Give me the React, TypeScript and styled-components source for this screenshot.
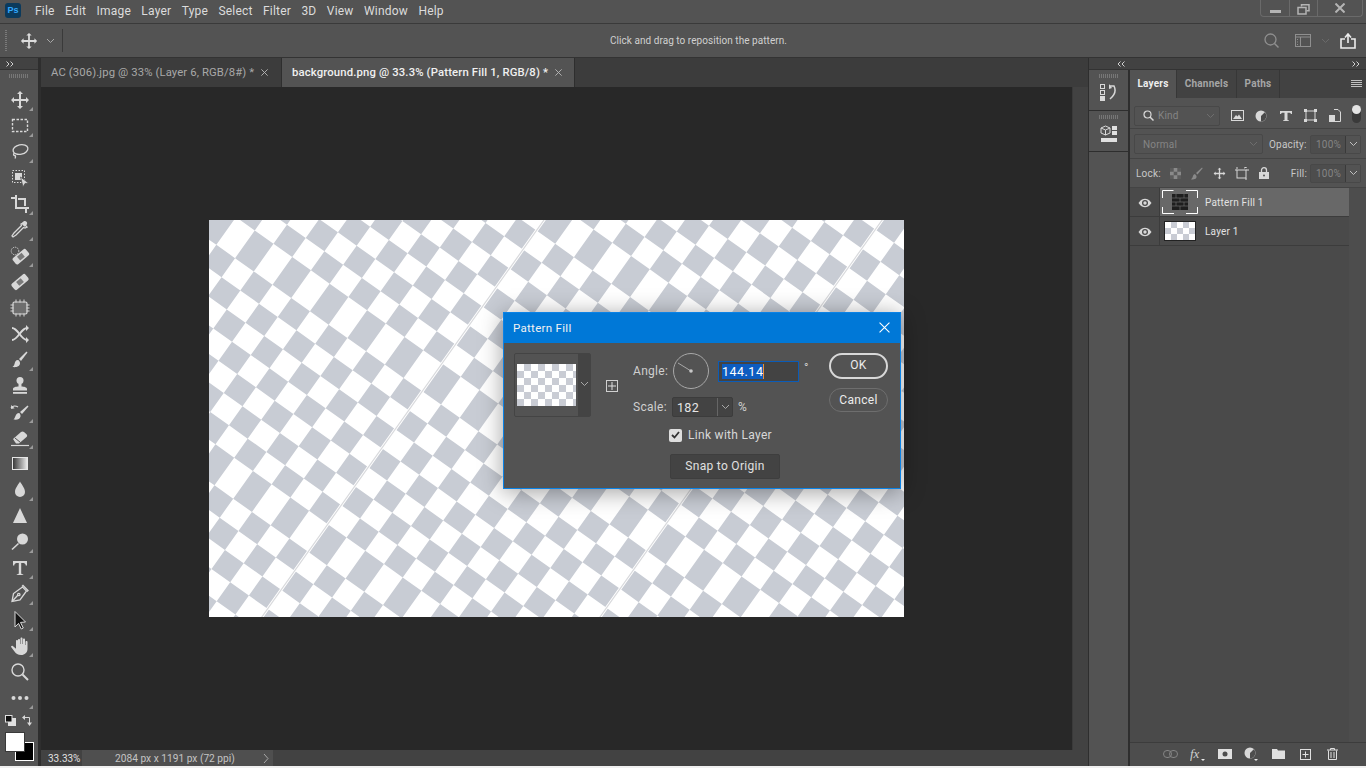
import React from 'react'
import styled, { createGlobalStyle } from 'styled-components'

const GlobalStyle = createGlobalStyle`
  html, body {
    margin: 0;
    padding: 0;
    background: #f0f0f0;
    overflow: hidden;
  }
  * {
    box-sizing: border-box;
  }
`

const Window = styled.div`
  width: 1366px;
  height: 768px;
  display: flex;
  flex-direction: column;
  background: #535353;
  color: #d6d6d6;
  font-family: Roboto, 'Noto Sans', sans-serif;
  font-size: 12px;
  overflow: hidden;
  border-bottom: 2px solid #f0f0f0;
`

/* menu bar */
const MenuBar = styled.div`
  height: 24px;
  flex: none;
  display: flex;
  align-items: flex-start;
  border-bottom: 1px solid #3a3a3a;
  position: relative;
`

const PsLogo = styled.div`
  width: 16px;
  height: 15px;
  margin: 3px 0 0 5px;
  background: #0b3a5c;
  border-radius: 3px;
  color: #31a8ff;
  font: 700 9px/15px 'Liberation Sans', sans-serif;
  text-align: center;
`

const MenuList = styled.div`
  display: flex;
  margin-left: 14px;
  gap: 10.4px;
  line-height: 22px;
  font-size: 12px;
  letter-spacing: 0.2px;
  color: #dcdcdc;
`

const WindowControls = styled.div`
  position: absolute;
  right: 3px;
  top: 0;
  width: 103px;
  height: 17px;
  display: grid;
  grid-template-columns: 28px 28px 1fr;
  border: 1px solid #6a6a6a;
  border-top: 0;
  border-radius: 0 0 4px 4px;
`

const WindowButton = styled.div<{ $pt?: number }>`
  display: flex;
  align-items: flex-start;
  justify-content: center;
  padding-top: ${({ $pt }) => $pt || 0}px;
  & + & {
    border-left: 1px solid #6a6a6a;
  }
`

/* options bar */
const OptionsBar = styled.div`
  height: 34px;
  flex: none;
  display: flex;
  align-items: center;
  border-bottom: 1px solid #333;
  position: relative;
`

const Grip = styled.div`
  width: 2px;
  height: 22px;
  margin-left: 5px;
  background: repeating-linear-gradient(to bottom, #7a7a7a 0 1px, transparent 1px 2px);
`

const OptionsMove = styled.div`
  display: flex;
  align-items: center;
  margin-left: 13px;
  gap: 8px;
`

const VSep = styled.div`
  width: 1px;
  height: 23px;
  margin-left: 7px;
  background: #3a3a3a;
`

const Hint = styled.div`
  position: absolute;
  left: 610px;
  top: 10px;
  font-size: 10px;
  line-height: 14px;
  letter-spacing: 0.05px;
  color: #d0d0d0;
`

const OptionsRight = styled.div`
  margin-left: auto;
  display: flex;
  align-items: center;
  gap: 10px;
  padding-right: 10px;
  & > svg:first-child {
    margin-right: 5px;
  }
`

/* main area */
const Main = styled.div`
  flex: 1;
  min-height: 0;
  display: flex;
`

const ToolColumn = styled.div`
  width: 41px;
  flex: none;
  display: flex;
  flex-direction: column;
  border-right: 3px solid #2e2e2e;
`

const CollapseStrip = styled.div<{ $align?: string }>`
  height: 12px;
  flex: none;
  display: flex;
  align-items: center;
  justify-content: ${({ $align }) => $align || 'flex-start'};
  padding: 0 6px;
  background: #424242;
  border-bottom: 1px solid #333;
`

const DockCollapse = styled.span`
  margin-left: 22px;
  display: flex;
`

const ToolGrip = styled.div`
  height: 17px;
  flex: none;
  display: flex;
  justify-content: center;
  padding-top: 4px;
  &::before {
    content: '';
    width: 20px;
    height: 4px;
    background: repeating-linear-gradient(to right, #777 0 1px, transparent 1px 2px);
  }
`

const ToolButton = styled.div<{ $more?: boolean }>`
  height: 26px;
  flex: none;
  display: flex;
  align-items: center;
  justify-content: center;
  padding-left: 2px;
  position: relative;
  &::after {
    content: '';
    display: ${({ $more }) => ($more ? 'block' : 'none')};
    position: absolute;
    right: 5px;
    bottom: 2px;
    border-style: solid;
    border-width: 0 0 4px 4px;
    border-color: transparent transparent #9a9a9a transparent;
  }
`

const SwapRow = styled.div`
  height: 18px;
  flex: none;
  display: flex;
  align-items: center;
  gap: 6px;
  padding-left: 5px;
`

const ColorStack = styled.div`
  position: relative;
  height: 30px;
  margin: 3px 0 0 5px;
`

const ColorChip = styled.div<{ $bg: boolean }>`
  position: absolute;
  width: ${({ $bg }) => ($bg ? '19px' : '20px')};
  height: ${({ $bg }) => ($bg ? '19px' : '20px')};
  left: ${({ $bg }) => ($bg ? '10px' : '0')};
  top: ${({ $bg }) => ($bg ? '10px' : '0')};
  background: ${({ $bg }) => ($bg ? '#000' : '#fff')};
  border: 1px solid ${({ $bg }) => ($bg ? '#fff' : '#3a3a3a')};
  z-index: ${({ $bg }) => ($bg ? 0 : 1)};
`

/* document area */
const DocColumn = styled.div`
  width: 1047px;
  flex: none;
  display: flex;
  flex-direction: column;
`

const TabBar = styled.div`
  height: 29px;
  flex: none;
  display: flex;
  background: #3c3c3c;
`

const Tab = styled.div<{ $active?: boolean; $w: number }>`
  width: ${({ $w }) => $w}px;
  display: flex;
  align-items: center;
  padding: 0 0 1px 10px;
  gap: 7px;
  font-size: 11.3px;
  letter-spacing: ${({ $active }) => ($active ? 0.15 : 0.12)}px;
  font-weight: ${({ $active }) => ($active ? 500 : 400)};
  color: ${({ $active }) => ($active ? '#f0f0f0' : '#a8a8a8')};
  background: ${({ $active }) => ($active ? '#535353' : '#3c3c3c')};
  border-right: 1px solid #2e2e2e;
  white-space: nowrap;
`

const DocBody = styled.div`
  flex: 1;
  min-height: 0;
  display: flex;
  position: relative;
`

const Pasteboard = styled.div`
  flex: 1;
  background: #282828;
  display: flex;
  align-items: center;
  justify-content: center;
`

const Artboard = styled.svg`
  display: block;
  width: 695px;
  height: 397px;
`

const VScroll = styled.div`
  width: 16px;
  flex: none;
  background: #424242;
  border-left: 1px solid #3a3a3a;
`

const StatusBar = styled.div`
  height: 16px;
  flex: none;
  display: flex;
  font-size: 10px;
  line-height: 17px;
  background: #424242;
`

const ZoomValue = styled.div`
  width: 41px;
  padding-left: 7px;
  color: #e0e0e0;
`

const DocInfo = styled.div`
  width: 191px;
  padding-left: 33px;
  background: #4f4f4f;
  color: #c4c4c4;
  display: flex;
  position: relative;
  font-size: 10.2px;
`

const InfoArrow = styled.div`
  position: absolute;
  right: 4px;
  top: 3px;
  display: flex;
`

/* dialog */
const Dialog = styled.div`
  position: absolute;
  left: 462px;
  top: 225px;
  width: 398px;
  height: 177px;
  background: #535353;
  border: 1px solid #0a82e6;
  box-shadow: 0 3px 22px rgba(0, 0, 0, 0.38);
  display: flex;
  flex-direction: column;
  letter-spacing: 0.3px;
`

const DialogTitle = styled.div`
  height: 30px;
  flex: none;
  background: #0078d7;
  color: #f2f2f2;
  display: flex;
  align-items: center;
  justify-content: space-between;
  padding: 0 10px 1px 9px;
  font-size: 11.5px;
`

const DialogBody = styled.div`
  flex: 1;
  display: grid;
  grid-template-columns: 77px 42px 196px 59px;
  padding: 10px 0 0 10px;
`

const PatternPicker = styled.div`
  width: 77px;
  height: 64px;
  display: flex;
  border: 1px solid #444;
  border-radius: 2px;
`

const PatternSwatchBox = styled.div`
  width: 63px;
  padding: 10px 0 0 2px;
`

const PatternSwatch = styled.div`
  width: 59px;
  height: 42px;
  background: repeating-conic-gradient(#c9ccd4 0 25%, #fff 0 50%) 0 0 / 14px 14px;
`

const PickerArrow = styled.div`
  flex: 1;
  background: #444;
  display: flex;
  align-items: center;
  justify-content: center;
  padding-bottom: 2px;
`

const PlusBox = styled.div`
  margin: 27px 0 0 15px;
  width: 12px;
  height: 12px;
  border: 1px solid #d0d0d0;
  display: flex;
  align-items: center;
  justify-content: center;
`

const ControlColumn = styled.div`
  display: flex;
  flex-direction: column;
  color: #cfcfcf;
`

const ControlRow = styled.div<{ $mt?: number }>`
  display: flex;
  align-items: center;
  margin-top: ${({ $mt }) => $mt || 0}px;
`

const ControlLabel = styled.span<{ $up?: boolean }>`
  width: 40px;
  flex: none;
  margin-top: ${({ $up }) => ($up ? -2 : 0)}px;
`

const AngleDial = styled.svg`
  flex: none;
`

const AngleInput = styled.div`
  width: 81px;
  height: 21px;
  margin: -2px 0 0 7px;
  padding-left: 3px;
  background: #434343;
  border: 1px solid #0b5cb8;
  display: flex;
  align-items: center;
  color: #fff;
  font-size: 12.5px;
  letter-spacing: 0.5px;
`

const Selected = styled.span`
  background: #0d5cc0;
  border-right: 1px solid #e8913a;
  line-height: 15px;
`

const Degree = styled.span`
  margin: -8px 0 0 5px;
  font-size: 12px;
`

const ScaleField = styled.div`
  width: 61px;
  height: 20px;
  margin-left: -1px;
  background: #434343;
  border: 1px solid #3c3c3c;
  border-radius: 2px;
  display: flex;
  align-items: center;
  padding-left: 4px;
  color: #e6e6e6;
  font-size: 12.5px;
`

const ScaleArrow = styled.div`
  margin-left: auto;
  width: 15px;
  height: 18px;
  border-left: 1px solid #666;
  display: flex;
  align-items: center;
  justify-content: center;
`

const Percent = styled.span`
  margin-left: 5px;
`

const CheckRow = styled.div`
  display: flex;
  align-items: center;
  gap: 6px;
  margin: 11px 0 0 36px;
  line-height: 14px;
  color: #d8d8d8;
`

const CheckMark = styled.div`
  width: 13px;
  height: 13px;
  border-radius: 2px;
  background: #dedede;
  display: flex;
  align-items: center;
  justify-content: center;
`

const SnapButton = styled.div`
  width: 110px;
  height: 25px;
  margin: 12px 0 0 37px;
  background: #434343;
  border: 1px solid #3e3e3e;
  border-radius: 2px;
  text-align: center;
  line-height: 23px;
  color: #e0e0e0;
`

const ButtonColumn = styled.div`
  display: flex;
  flex-direction: column;
  gap: 9px;
`

const PillButton = styled.div<{ $primary?: boolean }>`
  width: 59px;
  height: ${({ $primary }) => ($primary ? '26px' : '24px')};
  border: ${({ $primary }) => ($primary ? '2px solid #d8d8d8' : '1px solid #6e6e6e')};
  border-radius: 13px;
  text-align: center;
  line-height: ${({ $primary }) => ($primary ? '21px' : '22px')};
  color: #ececec;
`

/* right dock */
const RightArea = styled.div`
  flex: 1;
  min-width: 0;
  display: flex;
  flex-direction: column;
  border-left: 1px solid #2e2e2e;
`

const RightBody = styled.div`
  flex: 1;
  min-height: 0;
  display: flex;
`

const DockColumn = styled.div`
  width: 41px;
  flex: none;
  border-right: 2px solid #2e2e2e;
`

const DockGroup = styled.div`
  height: 41px;
  display: flex;
  flex-direction: column;
  align-items: center;
  border-bottom: 1px solid #2e2e2e;
  padding-top: 4px;
  &::before {
    content: '';
    width: 20px;
    height: 4px;
    margin-bottom: 6px;
    background: repeating-linear-gradient(to right, #777 0 1px, transparent 1px 2px);
  }
`

const LayersPanel = styled.div`
  flex: 1;
  min-width: 0;
  display: flex;
  flex-direction: column;
`

const PanelTabs = styled.div`
  height: 28px;
  flex: none;
  display: flex;
  background: #424242;
  align-items: stretch;
`

const PanelTab = styled.div<{ $active?: boolean; $w: number }>`
  width: ${({ $w }) => $w}px;
  text-align: center;
  line-height: 27px;
  font-size: 10px;
  font-weight: 700;
  letter-spacing: 0.2px;
  color: ${({ $active }) => ($active ? '#eeeeee' : '#a6a6a6')};
  background: ${({ $active }) => ($active ? '#535353' : 'transparent')};
  border-right: 1px solid #373737;
`

const MenuLines = styled.div`
  margin: 10px 4px 0 auto;
  width: 11px;
  height: 8px;
  background: repeating-linear-gradient(to bottom, #c0c0c0 0 1px, transparent 1px 2px);
`

const PanelRow = styled.div<{ $h: number; $pt?: number }>`
  height: ${({ $h }) => $h}px;
  flex: none;
  display: flex;
  align-items: center;
  padding: ${({ $pt }) => $pt || 0}px 5px 0 4px;
  border-bottom: 1px solid #444;
  font-size: 10px;
  letter-spacing: 0.2px;
`

const SelectBox = styled.div<{ $w: number }>`
  width: ${({ $w }) => $w}px;
  height: 20px;
  border: 1px solid #484848;
  border-radius: 2px;
  display: flex;
  align-items: center;
  padding: 0 4px 0 8px;
  gap: 4px;
  color: #858585;
  font-size: 10px;
  & > svg:last-child {
    margin-left: auto;
  }
`

const KindIcons = styled.div`
  display: flex;
  align-items: center;
  gap: 11.5px;
  margin-left: 11px;
`

const Toggle = styled.div`
  width: 9px;
  height: 18px;
  margin-top: -3px;
  border-radius: 5px;
  background: #3a3a3a;
  position: relative;
  &::before {
    content: '';
    position: absolute;
    left: 0;
    top: 0;
    width: 9px;
    height: 9px;
    border-radius: 50%;
    background: #e4e4e4;
  }
`

const FieldLabel = styled.span<{ $ml: number }>`
  margin-left: ${({ $ml }) => $ml}px;
  color: #c8c8c8;
`

const PercentField = styled.div`
  width: 51px;
  height: 19px;
  margin-left: auto;
  border: 1px solid #484848;
  border-radius: 2px;
  display: flex;
  align-items: center;
  color: #858585;
  padding-left: 5px;
  background: #4d4d4d;
`

const PercentArrow = styled.div`
  margin-left: auto;
  width: 15px;
  height: 17px;
  background: #535353;
  border-left: 1px solid #3a3a3a;
  display: flex;
  align-items: center;
  justify-content: center;
`

const LockIcons = styled.div`
  display: flex;
  align-items: center;
  gap: 9.5px;
  margin-left: 9px;
`

const LayerList = styled.div`
  flex: 1;
  min-height: 0;
  display: flex;
  background: #4a4a4a;
`

const LayerRows = styled.div`
  width: 219px;
`

const LayerScroll = styled.div`
  flex: 1;
  background: #4d4d4d;
`

const LayerRow = styled.div`
  height: 29px;
  display: flex;
  align-items: center;
  border-bottom: 1px solid #3c3c3c;
  font-size: 10px;
  letter-spacing: 0.2px;
  color: #e2e2e2;
`

const EyeCell = styled.div`
  width: 30px;
  height: 100%;
  padding-top: 1px;
  display: flex;
  align-items: center;
  justify-content: center;
  border-right: 1px solid #3c3c3c;
`

const LayerMain = styled.div<{ $active?: boolean }>`
  flex: 1;
  height: 100%;
  display: flex;
  align-items: center;
  gap: 7px;
  padding-left: 2px;
  background: ${({ $active }) => ($active ? '#686868' : 'transparent')};
`

const MaskThumb = styled.div`
  width: 36px;
  height: 24px;
  display: flex;
  align-items: center;
  justify-content: center;
`

const LayerThumb = styled.div`
  width: 32px;
  height: 20px;
  margin: 0 2px;
  border: 1px solid #222;
  background: repeating-conic-gradient(#c9ccd4 0 25%, #fff 0 50%) 0 0 / 12px 12px;
`

const PanelFooter = styled.div`
  height: 24px;
  flex: none;
  display: flex;
  align-items: center;
  justify-content: flex-end;
  padding: 0 20px 1px 0;
  border-top: 1px solid #3c3c3c;
  background: #4d4d4d;
`

const FooterSlot = styled.div`
  width: 27px;
  display: flex;
  align-items: center;
  justify-content: center;
`

const ICON = '#d8d8d8'

const Chevron: React.FC<{ color?: string }> = ({ color = '#a8a8a8' }) => (
  <svg width="9" height="6" viewBox="0 0 9 6">
    <path d="M1 1l3.5 3.5L8 1" fill="none" stroke={color} strokeWidth="1" />
  </svg>
)

const Double: React.FC<{ left?: boolean }> = ({ left }) => (
  <svg width="8" height="6" viewBox="0 0 8 6">
    <path
      d={left ? 'M3.5 .5L1 3l2.5 2.5M7.5 .5L5 3l2.5 2.5' : 'M.5 .5L3 3 .5 5.5M4.5 .5L7 3 4.5 5.5'}
      fill="none"
      stroke="#d0d0d0"
      strokeWidth="1"
    />
  </svg>
)

const Close: React.FC<{ size?: number; color?: string; weight?: number }> = ({
  size = 7,
  color = '#b8b8b8',
  weight = 1.3,
}) => (
  <svg width={size} height={size} viewBox="0 0 10 10">
    <path d="M.5 .5l9 9M9.5 .5l-9 9" stroke={color} strokeWidth={weight} fill="none" />
  </svg>
)

const MovePath = 'M10 1l3 3h-2v5h5V7l3 3-3 3v-2h-5v5h2l-3 3-3-3h2v-5H4v2l-3-3 3-3v2h5V4H7z'

const Eye = () => (
  <svg width="14" height="10" viewBox="0 0 14 10">
    <path d="M.5 5C3 1.5 5 .8 7 .8s4 .7 6.5 4.2C11 8.5 9 9.2 7 9.2S3 8.5 .5 5z" fill="#d8d8d8" />
    <circle cx="7" cy="5" r="3" fill="#4a4a4a" />
    <circle cx="7" cy="5" r="1.7" fill="#d8d8d8" />
  </svg>
)

const tools: { more: boolean; icon: React.ReactNode }[] = [
  { more: true, icon: <path d={MovePath} fill={ICON} /> },
  { more: true, icon: <rect x="2.5" y="3.5" width="15" height="12" fill="none" stroke={ICON} strokeWidth="1.4" strokeDasharray="2.5 1.5" /> },
  {
    more: true,
    icon: (
      <g fill="none" stroke={ICON} strokeWidth="1.3">
        <ellipse cx="10.5" cy="7.5" rx="7.5" ry="4.8" transform="rotate(-12 10.5 7.5)" />
        <path d="M4.5 11c-1.5 1-1 2.5 0 2.5s1.5 1 .5 3" />
      </g>
    ),
  },
  {
    more: false,
    icon: (
      <g>
        <rect x="2.5" y="2.5" width="12" height="12" fill="none" stroke={ICON} strokeDasharray="1.5 1.5" />
        <rect x="5" y="5" width="7" height="7" fill={ICON} />
        <path d="M10.5 9l8 6-3.5.5L13 19z" fill={ICON} stroke="#535353" strokeWidth=".8" />
      </g>
    ),
  },
  {
    more: true,
    icon: <path d="M1 3h4V1h2v12h12v2h-2v4h-2v-4H5V5H1zM8 4h8v8h-2V6H8z" fill={ICON} />,
  },
  {
    more: true,
    icon: (
      <g>
        <path d="M13 3l4 4-2 1-1.5-.5L6 15l-3 2-1-1 2-3 7.5-7.5L11 4z" fill="none" stroke={ICON} strokeWidth="1.3" />
        <path d="M12.5 2.5c1.5-1.8 3-1.8 4-.8s1 2.5-.8 4l-1.2 1-3-3z" fill={ICON} />
      </g>
    ),
  },
  {
    more: true,
    icon: (
      <g>
        <g transform="rotate(-40 10.5 11)">
          <rect x="2.5" y="7" width="17" height="8" rx="2" fill={ICON} />
          <rect x="8" y="8.5" width="6" height="5" fill="#7a7a7a" />
        </g>
        <circle cx="5" cy="5" r="3.8" fill="none" stroke={ICON} strokeWidth="1" strokeDasharray="1.2 1" />
      </g>
    ),
  },
  {
    more: false,
    icon: (
      <g transform="rotate(-40 10 10)">
        <rect x="1" y="6" width="18" height="8" rx="2" fill={ICON} />
        <rect x="7" y="7.5" width="6" height="5" fill="#7a7a7a" />
      </g>
    ),
  },
  {
    more: false,
    icon: (
      <g>
        <rect x="3" y="4" width="14" height="12" rx="1.5" fill="#6e6e6e" stroke={ICON} strokeWidth="1.2" />
        <path d="M6 1.5v3M10 1.5v3M14 1.5v3M6 15.5v3M10 15.5v3M14 15.5v3M.5 7h3M.5 10h3M.5 13h3M16.5 7h3M16.5 10h3M16.5 13h3" stroke={ICON} strokeWidth="1" />
      </g>
    ),
  },
  {
    more: false,
    icon: (
      <g fill="none" stroke={ICON} strokeWidth="2">
        <path d="M2 4c6 0 9 12 15 12" />
        <path d="M2 16c6 0 9-12 15-12" />
        <path d="M16 1l3 3-3 3zM16 13l3 3-3 3z" fill={ICON} stroke="none" />
      </g>
    ),
  },
  {
    more: true,
    icon: (
      <g fill={ICON}>
        <path d="M16.5 1.5l1 1L11 11 9 9z" />
        <path d="M8 10c-2.5 0-3 2-3.5 4S3 16.5 2.5 17c3 .5 7 0 7.5-3.5.2-1.5-.6-3-2-3.5z" />
      </g>
    ),
  },
  {
    more: false,
    icon: (
      <g fill={ICON}>
        <circle cx="10" cy="4.5" r="3.5" />
        <path d="M8.5 7h3v3.5c2 .2 5.5.5 5.5 2.5v1.5H3V13c0-2 3.5-2.3 5.5-2.5z" />
        <rect x="3" y="16" width="14" height="1.8" />
      </g>
    ),
  },
  {
    more: true,
    icon: (
      <g>
        <path d="M17.5 3.5l1 1L12 12l-2-2z" fill={ICON} />
        <path d="M9 11c-2 0-3 1.5-3.5 3S4 17 3.5 17.5c3 .5 6.5 0 7-3 .2-1.5-.3-3-1.5-3.5z" fill={ICON} />
        <path d="M1 6c1.5-2 4.5-2.5 7-1" fill="none" stroke={ICON} strokeWidth="1.3" />
        <path d="M1 3l.2 4 3.5-.8z" fill={ICON} />
      </g>
    ),
  },
  {
    more: true,
    icon: (
      <g>
        <path d="M3 11l8-7c1-.8 2-.8 3 0l2.5 2.2c.9 1 .8 2 0 2.8L9 15.5H6z" fill={ICON} />
        <path d="M5 10l5.5 4.5" stroke="#535353" strokeWidth="1" />
        <path d="M1 17.5h18" stroke={ICON} strokeWidth="1.2" />
      </g>
    ),
  },
  {
    more: false,
    icon: (
      <g>
        <defs>
          <linearGradient id="toolGradient" x1="0" y1="0" x2="1" y2="0">
            <stop offset="0" stopColor="#333" />
            <stop offset="1" stopColor="#eee" />
          </linearGradient>
        </defs>
        <rect x="2.5" y="3.5" width="15" height="12" fill="url(#toolGradient)" stroke="#e6e6e6" strokeWidth="1" />
      </g>
    ),
  },
  { more: true, icon: <path d="M10 1.5c1.5 3 5 6.5 5 10.5a5 5 0 0 1-10 0c0-4 3.5-7.5 5-10.5z" fill={ICON} /> },
  { more: false, icon: <path d="M10 2l7 15H3z" fill={ICON} /> },
  {
    more: true,
    icon: (
      <g>
        <circle cx="12.5" cy="7" r="5.5" fill={ICON} />
        <path d="M8.5 11.5L2 17.5" stroke={ICON} strokeWidth="1.6" />
      </g>
    ),
  },
  { more: true, icon: <path d="M3 3h14v4.5h-1.2C15.5 5.5 14.5 5 12 5h-.8v10c0 1 .4 1.3 2 1.3V17H6.8v-.7c1.6 0 2-.3 2-1.3V5H8C5.5 5 4.5 5.5 4.2 7.5H3z" fill={ICON} /> },
  {
    more: true,
    icon: (
      <g fill="none" stroke={ICON} strokeWidth="1.3">
        <path d="M12.5 3L3.5 9.5 2 17.5l8-1.5 6.5-9z" />
        <path d="M2.5 17L8 11" />
        <circle cx="8.8" cy="10.5" r="1.2" />
        <path d="M12 2.5l1-1 5 5-1 1" />
      </g>
    ),
  },
  { more: true, icon: <path d="M5 1.5L15.5 12l-5 .4 2.8 5.6-2 1-2.8-5.6L5 17z" fill="#141414" stroke={ICON} strokeWidth="1" /> },
  {
    more: true,
    icon: (
      <path
        d="M8 4c0-1.3 2-1.3 2 0v4h.5V2.5c0-1.3 2-1.3 2 0V8h.5V3.5c0-1.3 2-1.3 2 0V9h.5V6c0-1.3 2-1.3 2 0v7c0 3.5-2.8 6-6.3 6S6 17.5 4.5 15.5L1.3 11.3c-.8-1 .6-2.2 1.5-1.3L6 12.8V5c0-1.3 2-1.3 2 0z"
        fill={ICON}
      />
    ),
  },
  {
    more: false,
    icon: (
      <g fill="none" stroke={ICON}>
        <circle cx="8" cy="8" r="6" strokeWidth="1.4" />
        <path d="M12.5 12.5l5.5 5.5" strokeWidth="2" />
      </g>
    ),
  },
  {
    more: true,
    icon: (
      <g fill={ICON}>
        <circle cx="3.5" cy="10" r="2" />
        <circle cx="10" cy="10" r="2" />
        <circle cx="16.5" cy="10" r="2" />
      </g>
    ),
  },
]

// pattern tile, in the rotated space of the fill: one tall row per tile
const CELL_W = 22.97
const CELL_H = 23.3
const TALL_ROW = 34
const TILE_COLS = 12
const TILE_ROWS = 8
const TILE_W = CELL_W * TILE_COLS
const TILE_H = TALL_ROW + CELL_H * (TILE_ROWS - 1)

let greyCells = ''
let seamLines = ''
for (let ix = -1; ix <= 3; ix++) {
  const ox = ix * TILE_W
  seamLines += `M${ox.toFixed(2)} -600V600`
  for (let iy = -3; iy <= 2; iy++) {
    for (let r = 0; r < TILE_ROWS; r++) {
      const y = iy * TILE_H + (r === 0 ? 0 : TALL_ROW + (r - 1) * CELL_H)
      const h = r === 0 ? TALL_ROW : CELL_H
      for (let c = 0; c < TILE_COLS; c++) {
        if ((r + c) % 2 === 0) {
          const x = ox + c * CELL_W
          greyCells += `M${x.toFixed(2)} ${y.toFixed(2)}h${CELL_W}v${h}h${-CELL_W}z`
        }
      }
    }
  }
}

const App: React.FC = () => {
  return (
    <Window>
      <GlobalStyle />
      <MenuBar>
        <PsLogo>Ps</PsLogo>
        <MenuList>
          {['File', 'Edit', 'Image', 'Layer', 'Type', 'Select', 'Filter', '3D', 'View', 'Window', 'Help'].map((m) => (
            <span key={m}>{m}</span>
          ))}
        </MenuList>
        <WindowControls>
          <WindowButton $pt={10}>
            <svg width="11" height="3" viewBox="0 0 11 3">
              <rect width="11" height="3" fill="#b4b4b4" />
            </svg>
          </WindowButton>
          <WindowButton $pt={4}>
            <svg width="13" height="11" viewBox="0 0 13 11">
              <path d="M4.5 2.5V.8h7.5v6H9.5" fill="none" stroke="#b4b4b4" strokeWidth="1.5" />
              <rect x="1" y="3.5" width="8" height="6.5" fill="none" stroke="#b4b4b4" strokeWidth="1.5" />
            </svg>
          </WindowButton>
          <WindowButton $pt={3}>
            <Close size={10} color="#b4b4b4" weight={2} />
          </WindowButton>
        </WindowControls>
      </MenuBar>

      <OptionsBar>
        <Grip />
        <OptionsMove>
          <svg width="18" height="18" viewBox="0 0 20 20">
            <path d={MovePath} fill="#dcdcdc" />
          </svg>
          <Chevron />
        </OptionsMove>
        <VSep />
        <Hint>Click and drag to reposition the pattern.</Hint>
        <OptionsRight>
          <svg width="16" height="16" viewBox="0 0 16 16">
            <circle cx="6.5" cy="6.5" r="5.5" fill="none" stroke="#8f8f8f" strokeWidth="1.3" />
            <path d="M10.5 10.5l4 4" stroke="#8f8f8f" strokeWidth="1.5" />
          </svg>
          <svg width="16" height="13" viewBox="0 0 16 13">
            <rect x=".5" y=".5" width="15" height="12" fill="none" stroke="#8f8f8f" />
            <path d="M.5 3h15M5.5 3v9.5" stroke="#8f8f8f" />
            <path d="M2.5 5v1M2.5 7.5v1M2.5 10v1" stroke="#8f8f8f" />
          </svg>
          <Chevron color="#6a6a6a" />
          <svg width="16" height="16" viewBox="0 0 16 16">
            <path d="M5 6H1v9h14V6h-4" fill="none" stroke="#ededed" strokeWidth="1.6" />
            <path d="M8 10V2M5 4.5L8 1l3 3.5" fill="none" stroke="#ededed" strokeWidth="1.6" />
          </svg>
        </OptionsRight>
      </OptionsBar>

      <Main>
        <ToolColumn>
          <CollapseStrip>
            <Double />
          </CollapseStrip>
          <ToolGrip />
          {tools.map((t, i) => (
            <ToolButton key={i} $more={t.more}>
              <svg width="20" height="20" viewBox="0 0 20 20">
                {t.icon}
              </svg>
            </ToolButton>
          ))}
          <SwapRow>
            <svg width="11" height="11" viewBox="0 0 11 11">
              <rect x="3" y="3" width="8" height="8" fill="#e0e0e0" />
              <rect x=".5" y=".5" width="6.5" height="6.5" fill="#111" stroke="#e0e0e0" />
            </svg>
            <svg width="11" height="11" viewBox="0 0 11 11">
              <path d="M1 2.5h6.5V9" fill="none" stroke="#d8d8d8" />
              <path d="M3 0v5L0 2.5zM5 7.5h5L7.5 11z" fill="#d8d8d8" />
            </svg>
          </SwapRow>
          <ColorStack>
            <ColorChip $bg />
            <ColorChip $bg={false} />
          </ColorStack>
        </ToolColumn>

        <DocColumn>
          <TabBar>
            <Tab $w={241}>
              AC (306).jpg @ 33% (Layer 6, RGB/8#) *
              <Close />
            </Tab>
            <Tab $w={293} $active>
              background.png @ 33.3% (Pattern Fill 1, RGB/8) *
              <Close />
            </Tab>
          </TabBar>
          <DocBody>
            <Pasteboard>
              <Artboard viewBox="0 0 695 397">
                <rect width="695" height="397" fill="#fff" />
                <g transform="rotate(35.4) translate(-2.6 -18)">
                  <path d={greyCells} fill="#c8ccd4" />
                  <path d={seamLines} stroke="#fff" strokeWidth="3" fill="none" />
                  <path d={seamLines} stroke="#d9dadd" strokeWidth="1.2" fill="none" />
                </g>
              </Artboard>
            </Pasteboard>
            <VScroll />
            <Dialog>
              <DialogTitle>
                Pattern Fill
                <Close size={11} color="#fff" weight={1} />
              </DialogTitle>
              <DialogBody>
                <PatternPicker>
                  <PatternSwatchBox>
                    <PatternSwatch />
                  </PatternSwatchBox>
                  <PickerArrow>
                    <Chevron />
                  </PickerArrow>
                </PatternPicker>
                <div>
                  <PlusBox>
                    <svg width="8" height="8" viewBox="0 0 8 8">
                      <path d="M4 0v8M0 4h8" stroke="#e0e0e0" />
                    </svg>
                  </PlusBox>
                </div>
                <ControlColumn>
                  <ControlRow>
                    <ControlLabel $up>Angle:</ControlLabel>
                    <AngleDial width="38" height="38" viewBox="0 0 38 38">
                      <circle cx="18" cy="18" r="17.5" fill="none" stroke="#a8a8a8" strokeWidth="1" />
                      <path d="M5 10l13 8" stroke="#a8a8a8" />
                      <circle cx="18" cy="18" r="1.8" fill="#c8c8c8" />
                    </AngleDial>
                    <AngleInput>
                      <Selected>144.14</Selected>
                    </AngleInput>
                    <Degree>°</Degree>
                  </ControlRow>
                  <ControlRow $mt={6}>
                    <ControlLabel>Scale:</ControlLabel>
                    <ScaleField>
                      182
                      <ScaleArrow>
                        <Chevron />
                      </ScaleArrow>
                    </ScaleField>
                    <Percent>%</Percent>
                  </ControlRow>
                  <CheckRow>
                    <CheckMark>
                      <svg width="9" height="8" viewBox="0 0 9 8">
                        <path d="M1 4l2.5 2.5L8 1" fill="none" stroke="#333" strokeWidth="1.8" />
                      </svg>
                    </CheckMark>
                    Link with Layer
                  </CheckRow>
                  <SnapButton>Snap to Origin</SnapButton>
                </ControlColumn>
                <ButtonColumn>
                  <PillButton $primary>OK</PillButton>
                  <PillButton>Cancel</PillButton>
                </ButtonColumn>
              </DialogBody>
            </Dialog>
          </DocBody>
          <StatusBar>
            <ZoomValue>33.33%</ZoomValue>
            <DocInfo>
              2084 px x 1191 px (72 ppi)
              <InfoArrow>
                <svg width="6" height="11" viewBox="0 0 6 11">
                  <path d="M1 1l4 4.5L1 10" fill="none" stroke="#a8a8a8" />
                </svg>
              </InfoArrow>
            </DocInfo>
          </StatusBar>
        </DocColumn>

        <RightArea>
          <CollapseStrip $align="space-between">
            <DockCollapse>
              <Double left />
            </DockCollapse>
            <Double />
          </CollapseStrip>
          <RightBody>
            <DockColumn>
              <DockGroup>
                <svg width="18" height="18" viewBox="0 0 18 18">
                  <rect x=".5" y=".5" width="4" height="4" fill="none" stroke="#d8d8d8" />
                  <rect x=".5" y="6.5" width="4" height="4" fill="none" stroke="#d8d8d8" />
                  <rect y="12" width="5" height="5" fill="#d8d8d8" />
                  <path d="M9 2h5c2 4 2 8-4 13" fill="none" stroke="#d8d8d8" strokeWidth="1.5" />
                  <path d="M9 0v5l3-1z" fill="#d8d8d8" />
                </svg>
              </DockGroup>
              <DockGroup>
                <svg width="18" height="18" viewBox="0 0 18 18">
                  <path d="M5.5 1l4.5 2v5l-4.5 2L1 8V3z" fill="none" stroke="#d8d8d8" />
                  <path d="M1 3l4.5 2L10 3M5.5 5v5" stroke="#d8d8d8" fill="none" />
                  <rect x="12" y="1" width="5" height="4" fill="#e0e0e0" />
                  <rect x="12" y="6" width="5" height="4" fill="#e0e0e0" />
                  <rect x="1" y="13" width="16" height="4" fill="#e0e0e0" />
                </svg>
              </DockGroup>
            </DockColumn>
            <LayersPanel>
              <PanelTabs>
                <PanelTab $w={47} $active>
                  Layers
                </PanelTab>
                <PanelTab $w={60}>Channels</PanelTab>
                <PanelTab $w={43}>Paths</PanelTab>
                <MenuLines />
              </PanelTabs>
              <PanelRow $h={31} $pt={5}>
                <SelectBox $w={87}>
                  <svg width="11" height="11" viewBox="0 0 11 11">
                    <circle cx="4.5" cy="4.5" r="3.5" fill="none" stroke="#d8d8d8" strokeWidth="1.2" />
                    <path d="M7 7l3.5 3.5" stroke="#d8d8d8" strokeWidth="1.5" />
                  </svg>
                  Kind
                  <Chevron color="#6e6e6e" />
                </SelectBox>
                <KindIcons>
                  <svg width="13" height="11" viewBox="0 0 13 11">
                    <rect x=".5" y=".5" width="12" height="10" fill="none" stroke="#d8d8d8" />
                    <path d="M2 9l3-4 1.5 1.5L8 4.5 11 9z" fill="#d8d8d8" />
                  </svg>
                  <svg width="12" height="12" viewBox="0 0 12 12">
                    <circle cx="6" cy="6" r="5.5" fill="#d8d8d8" />
                    <path d="M6 6l3.8-3.8A5.5 5.5 0 0 1 6 11.5z" fill="#4a4a4a" />
                  </svg>
                  <svg width="14" height="12" viewBox="0 0 14 12">
                    <path d="M1 1h12v3h-1c-.3-1-1-1.3-2-1.3H8.5V10l1.5.5V11H4v-.5l1.5-.5V2.7H4c-1 0-1.7.3-2 1.3H1z" fill="#d8d8d8" />
                  </svg>
                  <svg width="13" height="13" viewBox="0 0 13 13">
                    <rect x="2" y="2" width="9" height="9" fill="none" stroke="#d8d8d8" />
                    <path d="M0 0h3v3H0zM10 0h3v3h-3zM0 10h3v3H0zM10 10h3v3h-3z" fill="#d8d8d8" />
                  </svg>
                  <svg width="12" height="13" viewBox="0 0 12 13">
                    <path d="M5 .5h4L11.5 3v9.5H5" fill="none" stroke="#d8d8d8" />
                    <rect y="6" width="6" height="7" fill="#d8d8d8" />
                  </svg>
                  <Toggle />
                </KindIcons>
              </PanelRow>
              <PanelRow $h={30} $pt={1}>
                <SelectBox $w={129}>
                  Normal
                  <Chevron color="#6e6e6e" />
                </SelectBox>
                <FieldLabel $ml={6}>Opacity:</FieldLabel>
                <PercentField>
                  100%
                  <PercentArrow>
                    <Chevron color="#c0c0c0" />
                  </PercentArrow>
                </PercentField>
              </PanelRow>
              <PanelRow $h={29}>
                <FieldLabel $ml={2}>Lock:</FieldLabel>
                <LockIcons>
                  <svg width="11" height="11" viewBox="0 0 11 11">
                    <rect width="11" height="11" fill="#8a8a8a" />
                    <path d="M0 0h3.7v3.7H0zM7.3 0H11v3.7H7.3zM3.7 3.7h3.6v3.6H3.7zM0 7.3h3.7V11H0zM7.3 7.3H11V11H7.3z" fill="#5c5c5c" />
                  </svg>
                  <svg width="13" height="13" viewBox="0 0 13 13">
                    <path d="M12 .5l.7.7L7.5 7.5 6 6zM5 7c-2 .5-2 2-2.5 3.5L1 12.5c2.5 0 6 0 5.5-3.5z" fill="#8a8a8a" />
                  </svg>
                  <svg width="13" height="13" viewBox="0 0 20 20">
                    <path d={MovePath} fill="#d8d8d8" />
                  </svg>
                  <svg width="14" height="13" viewBox="0 0 14 13">
                    <rect x="2" y="3" width="9" height="8" fill="none" stroke="#d8d8d8" />
                    <path d="M2 0v2M0 3h2M11 11v2M11 3h3M9 1l3-1" stroke="#d8d8d8" />
                  </svg>
                  <svg width="10" height="12" viewBox="0 0 10 12">
                    <path d="M2.5 5V3.2a2.5 2.5 0 0 1 5 0V5" fill="none" stroke="#d8d8d8" strokeWidth="1.3" />
                    <rect y="5" width="10" height="7" fill="#d8d8d8" />
                    <circle cx="5" cy="8.5" r="1" fill="#535353" />
                  </svg>
                </LockIcons>
                <FieldLabel $ml={22}>Fill:</FieldLabel>
                <PercentField>
                  100%
                  <PercentArrow>
                    <Chevron color="#c0c0c0" />
                  </PercentArrow>
                </PercentField>
              </PanelRow>
              <LayerList>
                <LayerRows>
                  <LayerRow>
                    <EyeCell>
                      <Eye />
                    </EyeCell>
                    <LayerMain $active>
                      <MaskThumb>
                        <svg width="36" height="24" viewBox="0 0 36 24">
                          <path d="M.5 8V.5h11M24 .5h11.5V8M35.5 17v6.5H24M12 23.5H.5V17" fill="none" stroke="#fff" strokeWidth="1" />
                          <rect x="10" y="4" width="16" height="16" fill="#1e1e1e" />
                          <path d="M10 8h16M10 12h16M10 16h16M14 4v4M22 4v4M18 8v4M14 12v4M22 12v4M18 16v4" stroke="#6a6a6a" strokeWidth=".7" />
                        </svg>
                      </MaskThumb>
                      Pattern Fill 1
                    </LayerMain>
                  </LayerRow>
                  <LayerRow>
                    <EyeCell>
                      <Eye />
                    </EyeCell>
                    <LayerMain>
                      <LayerThumb />
                      Layer 1
                    </LayerMain>
                  </LayerRow>
                </LayerRows>
                <LayerScroll />
              </LayerList>
              <PanelFooter>
                <FooterSlot>
                  <svg width="15" height="8" viewBox="0 0 15 8">
                    <rect x=".5" y=".5" width="8" height="7" rx="3.5" fill="none" stroke="#858585" />
                    <rect x="6.5" y=".5" width="8" height="7" rx="3.5" fill="none" stroke="#858585" />
                  </svg>
                </FooterSlot>
                <FooterSlot>
                  <svg width="15" height="14" viewBox="0 0 15 14">
                    <text x="0" y="11" fill="#d0d0d0" fontFamily="'Liberation Serif', serif" fontStyle="italic" fontSize="13">fx</text>
                    <path d="M11 12h4l-2 2z" fill="#e8e8e8" />
                  </svg>
                </FooterSlot>
                <FooterSlot>
                  <svg width="14" height="10" viewBox="0 0 14 10">
                    <rect width="14" height="10" fill="#e0e0e0" />
                    <circle cx="7" cy="5" r="2.5" fill="#4d4d4d" />
                  </svg>
                </FooterSlot>
                <FooterSlot>
                  <svg width="15" height="14" viewBox="0 0 15 14">
                    <circle cx="6" cy="6" r="5.5" fill="#d8d8d8" />
                    <path d="M6 6l3.8-3.8A5.5 5.5 0 0 1 6 11.5z" fill="#4d4d4d" />
                    <path d="M10 12h4l-2 2z" fill="#e8e8e8" />
                  </svg>
                </FooterSlot>
                <FooterSlot>
                  <svg width="13" height="10" viewBox="0 0 13 10">
                    <path d="M0 0h5l1 1.5h7V10H0z" fill="#e0e0e0" />
                  </svg>
                </FooterSlot>
                <FooterSlot>
                  <svg width="11" height="11" viewBox="0 0 11 11">
                    <rect x=".5" y=".5" width="10" height="10" fill="none" stroke="#e0e0e0" />
                    <path d="M5.5 2.5v6M2.5 5.5h6" stroke="#e0e0e0" />
                  </svg>
                </FooterSlot>
                <FooterSlot>
                  <svg width="11" height="12" viewBox="0 0 11 12">
                    <path d="M0 2h11M3.5 2V.5h4V2M1.5 2.5v9h8v-9M4 4v6M7 4v6" fill="none" stroke="#e0e0e0" />
                  </svg>
                </FooterSlot>
              </PanelFooter>
            </LayersPanel>
          </RightBody>
        </RightArea>
      </Main>
    </Window>
  )
}

export default App
